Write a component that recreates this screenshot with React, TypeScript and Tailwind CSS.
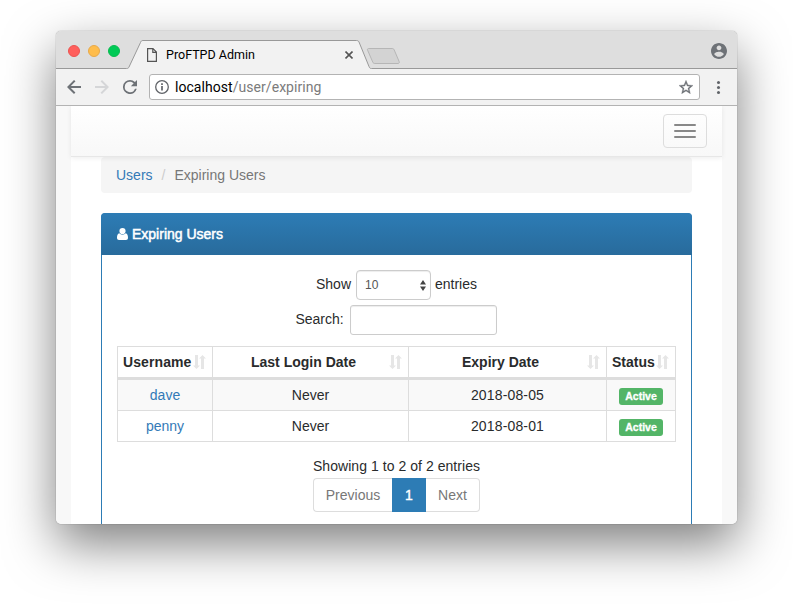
import React from "react";

function SortIcon({ className = "" }: { className?: string }) {
  return (
    <svg className={"h-[14px] w-[13px] shrink-0 " + className} viewBox="0 0 13 14" fill="#e6e6e6">
      <path d="M2 0h3v10.500h2L3.500 14 0 10.500h2zM8 14h3V3.500h2L9.500 0 6 3.500h2z" />
    </svg>
  );
}

function TabStrip() {
  return (
    <div className="relative flex h-[38px] items-center">
      <svg className="absolute inset-0 h-[38px] w-[681px]" viewBox="0 0 681 38" fill="none">
        <path d="M0 0h681v38H0z" fill="#dedede" />
        <path d="M0 37.500H70.500C72 37.500 72.500 37 73 36L84.500 11.500C85 10 85.700 9.500 87 9.500H300.500C301.800 9.500 302.500 10 303 11L313 35.500C313.600 37 314 37.500 315.500 37.500H681V38H0z" fill="#f2f2f2" />
        <path d="M0 37.500H70.500C72 37.500 72.500 37 73 36L84.500 11.500C85 10 85.700 9.500 87 9.500H300.500C301.800 9.500 302.500 10 303 11L313 35.500C313.600 37 314 37.500 315.500 37.500H681" stroke="#999" />
        <path d="M312.500 17.500H336c1 0 1.700.3 2.100 1.200l5.100 12c.4 1-.1 1.800-1.200 1.800H319c-1.200 0-1.700-.3-2.200-1.300l-5.200-12c-.4-1 0-1.700.9-1.700z" fill="#d3d3d3" stroke="#b6b6b6" />
      </svg>
      <div className="relative flex h-[38px] w-full items-center pt-[2px]">
        <div className="ml-3 flex gap-2">
          <span className="size-3 rounded-full border border-[#ec5350] bg-[#ff5f5c]" />
          <span className="size-3 rounded-full border border-[#e8a94a] bg-[#ffbd4c]" />
          <span className="size-3 rounded-full border border-[#09bb50] bg-[#00ca56]" />
        </div>
        <svg className="mt-[7px] ml-[27px] h-[14px] w-[10px]" viewBox="0 0 10 14" fill="none" stroke="#555" strokeWidth="1.200">
          <path d="M.6.6H6L9.400 4v9.400H.6zM5.800.8v3.500h3.500" />
        </svg>
        <span className="mt-[8px] ml-[9px] w-[90px] font-[Roboto,sans-serif] text-[12.500px] leading-4 whitespace-nowrap text-black">ProFTPD Admin</span>
        <svg className="mt-[7px] ml-[89px] size-2" viewBox="0 0 8 8" stroke="#555" strokeWidth="1.600">
          <path d="M.5.500l7 7m0-7l-7 7" />
        </svg>
        <svg className="mr-[10px] ml-auto size-4" viewBox="2 2 20 20" fill="#6e7277">
          <path d="M12 2C6.480 2 2 6.480 2 12s4.480 10 10 10 10-4.480 10-10S17.520 2 12 2zm0 3c1.660 0 3 1.340 3 3s-1.340 3-3 3-3-1.340-3-3 1.340-3 3-3zm0 14.200c-2.500 0-4.710-1.280-6-3.220.03-1.990 4-3.080 6-3.080 1.990 0 5.970 1.090 6 3.080-1.290 1.940-3.500 3.220-6 3.220z" />
        </svg>
      </div>
    </div>
  );
}

function Toolbar() {
  return (
    <div className="flex h-[37px] items-center border-b border-[#b3b3b3] bg-[#f2f2f2]">
      <svg className="ml-[11px] size-[14px]" viewBox="4 4 16 16" fill="#6e7277">
        <path d="M20 10.850H8.400l5.300-5.300L12 4l-8 8 8 8 1.600-1.600-5.200-5.250H20z" />
      </svg>
      <svg className="ml-[14px] size-[14px] rotate-180" viewBox="4 4 16 16" fill="#d5d6d8">
        <path d="M20 10.850H8.400l5.300-5.300L12 4l-8 8 8 8 1.600-1.600-5.200-5.250H20z" />
      </svg>
      <svg className="ml-[14px] size-[14px]" viewBox="4 4 16 16" fill="#6e7277">
        <path d="M17.650 6.350A7.960 7.960 0 0 0 12 4a8 8 0 1 0 7.730 10h-2.080A6 6 0 1 1 12 6c1.660 0 3.140.69 4.220 1.780L13 11h7V4z" />
      </svg>
      <div className="ml-3 flex h-[26px] w-[551px] items-center rounded-[3px] border border-[#b3b3b3] bg-white pr-[6px] pl-[5px] font-[Roboto,sans-serif] text-[14px] leading-5">
        <svg className="size-[14px]" viewBox="0 0 14 14" fill="none" stroke="#606368">
          <circle cx="7" cy="7" r="6.300" strokeWidth="1.300" />
          <path d="M7 6v4.500M7 3.300v1.600" strokeWidth="1.700" />
        </svg>
        <span className="ml-[6px] tracking-[0.050px] text-black">localhost</span>
        <span className="tracking-[0.050px] text-[#7b7b7b]">/user/expiring</span>
        <svg className="ml-auto size-[14px]" viewBox="2 2 20 19" fill="#6e7277" stroke="#6e7277" strokeWidth="0.500">
          <path d="M22 9.240l-7.190-.62L12 2 9.190 8.630 2 9.240l5.460 4.730L5.820 21 12 17.270 18.180 21l-1.630-7.030zM12 15.400l-3.760 2.270 1-4.280-3.320-2.880 4.380-.38L12 6.100l1.710 4.040 4.380.38-3.320 2.880 1 4.280z" />
        </svg>
      </div>
      <div className="ml-[17px] flex flex-col gap-[2px]">
        <span className="size-[3px] rounded-full bg-[#606368]" />
        <span className="size-[3px] rounded-full bg-[#606368]" />
        <span className="size-[3px] rounded-full bg-[#606368]" />
      </div>
    </div>
  );
}

const users = [
  { name: "dave", login: "Never", expiry: "2018-08-05" },
  { name: "penny", login: "Never", expiry: "2018-08-01" },
];

const columns = "grid grid-cols-[95px_196px_198px_69px]";

function UsersTable() {
  return (
    <div className="mt-[11px] w-[559px] border border-[#ddd] text-center">
      <div className={columns + " h-[33px] divide-x divide-[#ddd] border-b-[3px] border-[#ddd] font-bold"}>
        <div className="flex items-center pl-[5px]">
          <span className="tracking-[0.100px]">Username</span><SortIcon className="ml-px" />
        </div>
        <div className="flex items-center justify-end pr-[6px]">
          <span className="mr-[33px]">Last Login Date</span><SortIcon />
        </div>
        <div className="flex items-center justify-end pr-[6px]">
          <span className="mr-[48px]">Expiry Date</span><SortIcon />
        </div>
        <div className="flex items-center pl-[5px]">
          <span>Status</span><SortIcon className="ml-px" />
        </div>
      </div>
      {users.map((u, i) => (
        <div key={u.name} className={columns + " divide-x divide-[#ddd] " + (i === 0 ? "h-[31px] border-b border-[#ddd] bg-[#f9f9f9]" : "h-[30px] bg-white")}>
          <a className="pt-[5px] text-[#337ab7]">{u.name}</a>
          <span className="pt-[5px]">{u.login}</span>
          <span className="pt-[5px] tracking-[0.150px]">{u.expiry}</span>
          <span className="flex justify-center pt-[8px] pr-px">
            <span className="flex h-[17px] w-[44px] items-center justify-center rounded-[3px] bg-[#53b567] text-[10.500px] leading-none font-bold text-white [-webkit-text-stroke:0.300px_white]">Active</span>
          </span>
        </div>
      ))}
    </div>
  );
}

function Page() {
  return (
    <div className="h-[418px] overflow-hidden bg-[#f8f8f8] px-[15px] font-['Liberation_Sans',Arial,sans-serif] text-[14px] leading-5 text-[#292b2c]">
      <div className="h-full bg-white">
        <nav className="relative flex h-[51px] items-start justify-end border-b border-[#e7e7e7] bg-gradient-to-b from-white to-[#f8f8f8] pt-2 pr-[15px] shadow-[0_1px_5px_rgba(0,0,0,0.075)]">
          <button className="flex h-[34px] w-[44px] flex-col items-center justify-center gap-1 rounded border border-[#ddd]">
            <span className="h-[2px] w-[22px] rounded-[1px] bg-[#888]" />
            <span className="h-[2px] w-[22px] rounded-[1px] bg-[#888]" />
            <span className="h-[2px] w-[22px] rounded-[1px] bg-[#888]" />
          </button>
        </nav>
        <div className="px-[30px]">
          <div className="flex h-9 items-center rounded bg-[#f5f5f5] pl-[15px] text-[#777]">
            <a className="text-[#337ab7]">Users</a>
            <span className="mx-[9px] text-[#ccc]">/</span>
            <span>Expiring Users</span>
          </div>
          <section className="mt-5 h-[330px] rounded-t border border-[#2d7cb5] bg-white">
            <header className="-mx-px -mt-px flex h-[42px] items-center rounded-t bg-gradient-to-b from-[#2d7cb5] to-[#286b9c] pl-4 text-white">
              <svg className="h-3 w-[11px]" viewBox="0 0 11 12" fill="white">
                <circle cx="5.500" cy="3.100" r="3.100" />
                <path d="M2.300 5.300C.7 5.800 0 7.400 0 9.800 0 11.200.8 12 2 12h7c1.200 0 2-.8 2-2.200 0-2.400-.7-4-2.300-4.500C7 7.100 4 7.100 2.300 5.300z" />
              </svg>
              <span className="ml-1 [-webkit-text-stroke:0.500px_white]">Expiring Users</span>
            </header>
            <div className="px-[15px] pt-[15px]">
              <div className="flex h-[30px] items-center justify-center pb-[2px]">
                <span>Show</span>
                <div className="mt-[2px] mr-1 ml-[5px] flex h-[30px] w-[75px] items-center rounded-[4px] border border-[#ccc] pr-1 pl-2 text-[12px] text-[#555] shadow-[inset_0_1px_1px_rgba(0,0,0,0.075)]">
                  <span>10</span>
                  <svg className="ml-auto h-[11px] w-[6px]" viewBox="0 0 6 11" fill="#444">
                    <path d="M3 0l3 4.500H0zM3 11L0 6.500h6z" />
                  </svg>
                </div>
                <span>entries</span>
              </div>
              <div className="mt-[5px] flex h-[30px] items-center justify-center pr-px">
                <span className="-mt-[2px]">Search:</span>
                <div className="ml-[6px] h-[30px] w-[147px] rounded-[3px] border border-[#ccc] shadow-[inset_0_1px_1px_rgba(0,0,0,0.075)]" />
              </div>
              <UsersTable />
              <p className="mt-[14px] text-center tracking-[0.050px]">Showing 1 to 2 of 2 entries</p>
              <div className="mx-auto mt-[2px] flex h-[34px] w-[167px] text-center leading-8 text-[#777]">
                <span className="w-[79px] rounded-l border border-r-0 border-[#ddd]">Previous</span>
                <span className="w-[34px] border border-[#2d7cb5] bg-[#2d7cb5] text-white [-webkit-text-stroke:0.400px_white]">1</span>
                <span className="w-[54px] rounded-r border border-l-0 border-[#ddd]">Next</span>
              </div>
            </div>
          </section>
        </div>
      </div>
    </div>
  );
}

export default function App() {
  return (
    <div className="h-[604px] w-[793px] overflow-hidden bg-white pt-[31px] pl-[56px]">
      <div className="h-[493px] w-[681px] rounded-[5px] shadow-[0_0_1px_rgba(0,0,0,0.6),0_20px_50px_rgba(0,0,0,0.5)]">
        <div className="h-full overflow-hidden rounded-[5px]">
          <TabStrip />
          <Toolbar />
          <Page />
        </div>
      </div>
    </div>
  );
}
